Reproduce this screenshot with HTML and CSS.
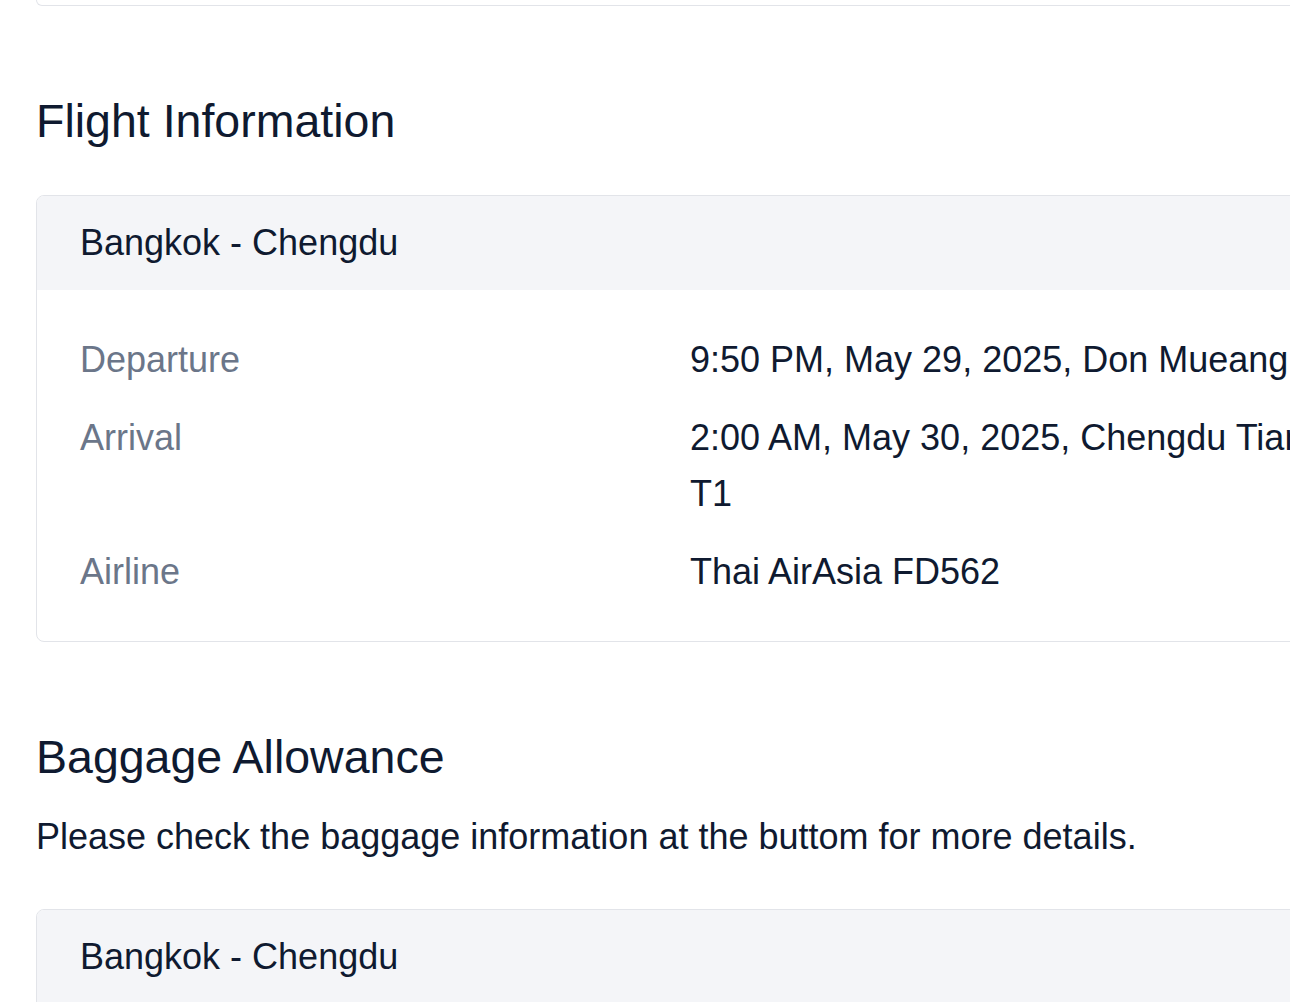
FILE: index.html
```html
<!DOCTYPE html>
<html lang="en">

<head>
	<meta charset="UTF-8">
	<meta name="viewport" content="width=device-width, initial-scale=1.0">
	<title>Booking Details</title>
	<link rel="stylesheet" href="styles.css">
</head>

<body>
	<main class="page">
		<div class="card card-tail"></div>

		<section class="block">
			<h2>Flight Information</h2>
			<div class="card">
				<div class="card-head">Bangkok - Chengdu</div>
				<dl class="info">
					<dt>Departure</dt>
					<dd>9:50 PM, May 29, 2025, Don Mueang International Airport T1</dd>
					<dt>Arrival</dt>
					<dd>2:00 AM, May 30, 2025, Chengdu Tianfu International Airport T1</dd>
					<dt>Airline</dt>
					<dd>Thai AirAsia FD562</dd>
				</dl>
			</div>
		</section>

		<section class="block">
			<h2>Baggage Allowance</h2>
			<p class="note">Please check the baggage information at the buttom for more details.</p>
			<div class="card">
				<div class="card-head">Bangkok - Chengdu</div>
				<dl class="info">
					<dt>Carry-on</dt>
					<dd>1 piece, 7 kg</dd>
					<dt>Checked</dt>
					<dd>Not included</dd>
				</dl>
			</div>
		</section>
	</main>
</body>

</html>
```

FILE: styles.css
```css
html,
body {
	overflow: hidden;
}

body {
	font-family: "Liberation Sans", Arial, sans-serif;
	font-size: 36px;
	line-height: 56px;
	color: #0f1a30;
	margin: 0;
	padding: 0;
	background: #fff;
}

.page {
	width: 1720px;
	padding: 0 36px;
}

.card {
	border: 1px solid #e2e4e9;
	border-radius: 8px;
	overflow: hidden;
	background: #fff;
}

.card-tail {
	height: 5px;
	border-top: none;
	border-radius: 0 0 8px 8px;
}

.block {
	padding-top: 88px;
}

h2 {
	font-size: 46.5px;
	font-weight: normal;
	line-height: 55px;
	margin: 0 0 46px;
}

.note {
	margin: -22px 0 44px;
}

.card-head {
	background: #f4f5f8;
	padding: 19px 43px;
}

.info {
	display: grid;
	grid-template-columns: 610px 995px;
	row-gap: 22px;
	margin: 0;
	padding: 42px 43px 41px;
}

.info dt {
	color: #6b7689;
}

.info dd {
	margin: 0;
}
```
